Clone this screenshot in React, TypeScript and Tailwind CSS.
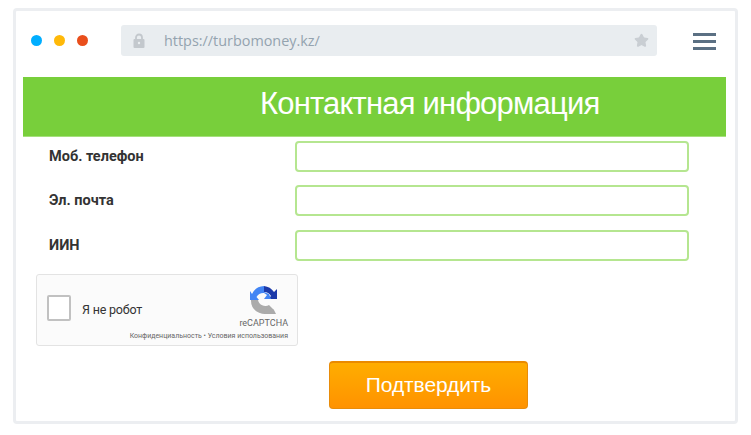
import React from 'react';
import { Star } from 'lucide-react';

const fields = ['Моб. телефон', 'Эл. почта', 'ИИН'];

function RecaptchaLogo() {
  return (
    <svg width="28" height="30" viewBox="0 0 28 30" className="block">
      <path d="M14 1 L14 7 A8 8 0 0 1 21 11 L18 14 L27 14 L27 4 L24 7 A14 14 0 0 0 14 1 Z" fill="#1c3aa9" />
      <path d="M14 1 A14 14 0 0 0 2 9 L0 6 L0 15 L9 15 L6.500 12 A8 8 0 0 1 14 8 L17 10 L14 14 L21 14 L19 9 L14 7 Z" fill="#4285f4" />
      <path d="M1 15 A13.500 13.500 0 0 0 24 25 L19 20 A7.500 7.500 0 0 1 8 15 Z" fill="#ababab" />
      <path d="M17 21 L24 25 L26 29 L14 29 Z" fill="#ababab" />
    </svg>
  );
}

function LockIcon() {
  return (
    <svg width="12" height="15" viewBox="0 0 12 15" className="block">
      <path d="M3 7 V4.500 A3 3 0 0 1 9 4.500 V7" fill="none" stroke="#c3c8cd" strokeWidth="1.800" />
      <rect x="0.500" y="6" width="11" height="9" rx="1" fill="#c3c8cd" />
      <circle cx="6" cy="10" r="1.200" fill="#e9edf0" />
    </svg>
  );
}

export default function App() {
  return (
    <div className="w-[751px] h-[435px] bg-white pt-[8px] pl-[13px] overflow-hidden font-['Liberation_Sans',sans-serif]">
      <div className="w-[725px] h-[416px] border-[3px] border-[#eceef1] rounded-[4px] bg-white">
        <div className="h-[66px] pt-[14px] flex">
          <div className="flex gap-[12px] pl-[15px] pt-[10px] w-[105px]">
            <span className="w-[11px] h-[11px] rounded-full bg-[#00aeff]" />
            <span className="w-[11px] h-[11px] rounded-full bg-[#ffb909]" />
            <span className="w-[11px] h-[11px] rounded-full bg-[#e94e1b]" />
          </div>
          <div className="w-[536px] h-[31px] rounded-[3px] bg-[#e9edf0] flex items-center pl-[12px] pr-[8px]">
            <LockIcon />
            <span className="ml-[19px] text-[14.400px] text-[#94a3af] font-['Open_Sans',sans-serif]">https://turbomoney.kz/</span>
            <Star className="ml-auto w-[15px] h-[15px] text-[#c9ced3] fill-[#c9ced3]" />
          </div>
          <div className="ml-[36px] mt-[8px] w-[23px] flex flex-col gap-[4px]">
            <span className="h-[3px] bg-[#5b7083]" />
            <span className="h-[3px] bg-[#5b7083]" />
            <span className="h-[3px] bg-[#5b7083]" />
          </div>
        </div>

        <div className="ml-[7px] w-[703px] h-[60px] bg-[#78cf3b] border-b border-[#a5e07c] pl-[237px] pb-[6px] flex items-center">
          <h1 className="text-[31px] leading-none text-white font-normal tracking-[-0.800px]">Контактная информация</h1>
        </div>

        <div className="pt-[4px] pl-[33px] flex flex-col gap-[13px]">
          {fields.map((label) => (
            <div key={label} className="flex items-center h-[31px] last:mt-[1px]">
              <label className="w-[246px] text-[14.500px] font-bold text-[#333333] font-['Roboto',sans-serif]">{label}</label>
              <input className="w-[394px] h-[31px] rounded-[4px] border-2 border-[#b5e690] bg-white" />
            </div>
          ))}
        </div>

        <div className="ml-[20px] mt-[13px] w-[262px] h-[72px] border border-[#e3e3e3] rounded-[3px] bg-[#fbfbfb] relative flex items-center pl-[10px] pb-[4px] font-['Roboto',sans-serif]">
          <span className="w-[24px] h-[26px] rounded-[2px] border-2 border-[#c1c1c1] bg-white" />
          <span className="ml-[11px] mt-[4px] text-[12.500px] tracking-[-0.2px] text-[#333333]">Я не робот</span>
          <div className="absolute right-[9px] top-[10px] flex flex-col items-center">
            <RecaptchaLogo />
            <span className="mt-[3px] text-[9px] leading-[10px] text-[#666666]">reCAPTCHA</span>
          </div>
          <span className="absolute right-[9px] bottom-[5px] text-[7px] leading-[8px] text-[#666666]">Конфиденциальность • Условия использования</span>
        </div>

        <div className="mt-[15px] ml-[313px]">
          <button className="w-[199px] h-[48px] pb-[2px] rounded-[4px] border border-[#e88c0a] border-t-2 border-t-[#ea8a00] bg-gradient-to-b from-[#ffad00] to-[#ff9200] text-white text-[21px] tracking-[-0.1px]">Подтвердить</button>
        </div>
      </div>
    </div>
  );
}
